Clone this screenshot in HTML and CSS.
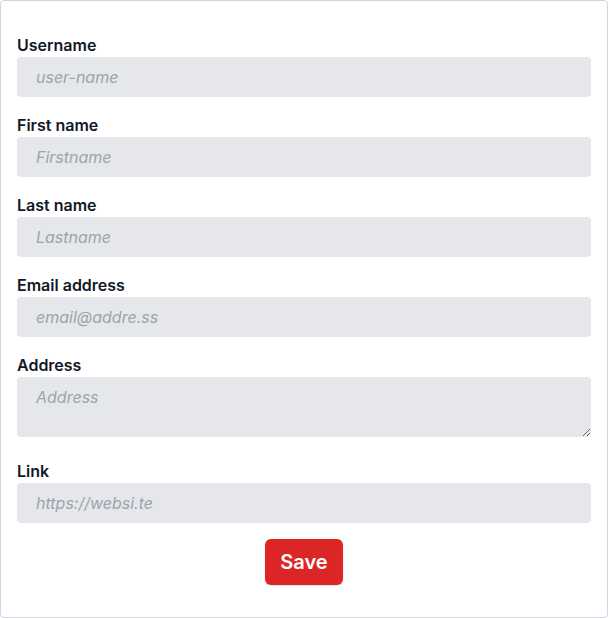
FILE: index.html
```html
<!DOCTYPE html>
<html>
<head>
<meta charset="utf-8">
<link rel="stylesheet" href="styles.css">
</head>
<body>
<form class="card">
  <div class="field">
    <label class="label">Username</label>
    <input class="input" placeholder="user-name">
  </div>
  <div class="field">
    <label class="label">First name</label>
    <input class="input" placeholder="Firstname">
  </div>
  <div class="field">
    <label class="label">Last name</label>
    <input class="input" placeholder="Lastname">
  </div>
  <div class="field">
    <label class="label">Email address</label>
    <input class="input" placeholder="email@addre.ss">
  </div>
  <div class="field field-area">
    <label class="label">Address</label>
    <textarea class="input textarea" placeholder="Address"></textarea>
  </div>
  <div class="field">
    <label class="label">Link</label>
    <input class="input" placeholder="https://websi.te">
  </div>
  <div class="actions">
    <button type="button" class="btn">Save</button>
  </div>
</form>
</body>
</html>
```
FILE: styles.css
```css
* { box-sizing: border-box; }
html, body { margin: 0; padding: 0; background: #fff; }
body { font-family: Inter, "Noto Sans", sans-serif; }
.card {
  width: 608px;
  height: 618px;
  border: 1px solid #d1d5db;
  border-radius: 4px;
  padding: 32px 16px 32px 16px;
}
.field { margin-bottom: 16px; }
.field-area { margin-bottom: 22px; }
.label {
  display: block;
  font-size: 16px;
  line-height: 24px;
  font-weight: 600;
  color: #111827;
}
.input {
  display: block;
  width: 100%;
  height: 40px;
  border: 0;
  border-radius: 4px;
  background: #e5e7eb;
  padding: 0 19px;
  font-family: Inter, "Noto Sans", sans-serif;
  font-size: 16px;
  color: #111827;
  outline: none;
}
.input::placeholder { color: #9ca3af; font-style: italic; }
.textarea {
  display: block;
  height: 60px;
  padding: 10px 19px;
  line-height: 20px;
  resize: vertical;
}
.actions { display: flex; justify-content: center; }
.btn {
  background: #dc2626;
  color: #fff;
  border: 0;
  border-radius: 6px;
  height: 46px;
  padding: 0 15px;
  font-family: Inter, "Noto Sans", sans-serif;
  font-size: 20px;
  font-weight: 600;
  box-shadow: 0 1px 2px rgba(0,0,0,0.15);
}
```
